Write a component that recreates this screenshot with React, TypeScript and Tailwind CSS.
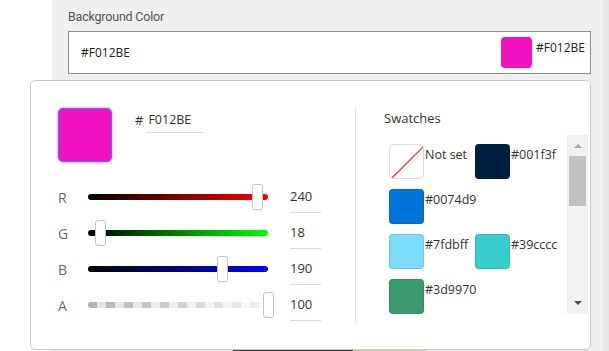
import { useState } from "react";

type Channel = {
  label: string;
  value: number;
  max: number;
  track: string;
};

const channels: Channel[] = [
  { label: "R", value: 240, max: 255, track: "bg-[linear-gradient(to_right,#000,#ff0000)]" },
  { label: "G", value: 18, max: 255, track: "bg-[linear-gradient(to_right,#000,#00ff00)]" },
  { label: "B", value: 190, max: 255, track: "bg-[linear-gradient(to_right,#000,#0000ff)]" },
  {
    label: "A",
    value: 100,
    max: 100,
    track:
      "bg-[linear-gradient(to_right,rgba(255,255,255,0.15),rgba(255,255,255,0.85)),repeating-linear-gradient(90deg,#a3a3a3_0_9px,#dddddd_9px_18px)]",
  },
];

type Swatch = { name: string; color?: string };

const swatchRows: Swatch[][] = [
  [{ name: "Not set" }, { name: "#001f3f", color: "bg-[#001f3f]" }],
  [{ name: "#0074d9", color: "bg-[#0074d9]" }],
  [
    { name: "#7fdbff", color: "bg-[#7fdbff]" },
    { name: "#39cccc", color: "bg-[#39cccc]" },
  ],
  [{ name: "#3d9970", color: "bg-[#3d9970]" }],
];

function SliderRow({ channel }: { channel: Channel }) {
  const left = (channel.value / channel.max) * 180;
  return (
    <div className="flex h-[36px] items-center">
      <span className="w-[30px] text-[14px] text-[#6b6b6b]">{channel.label}</span>
      <div className={`relative h-[6px] w-[180px] rounded-full ${channel.track}`}>
        <div
          className="absolute top-[-10px] h-[26px] w-[11px] rounded-[3px] border border-[#c4c4c4] bg-white"
          style={{ left: left - 5.5 }}
        />
      </div>
      <div className="ml-[22px] flex h-[32px] w-[31px] items-center border-b border-[#dedede] text-[13px] text-[#333]">
        {channel.value}
      </div>
    </div>
  );
}

function SwatchItem({ swatch, wide }: { swatch: Swatch; wide: boolean }) {
  return (
    <div className={`flex items-start ${wide ? "w-[86px]" : ""}`}>
      {swatch.color ? (
        <div className={`h-[35px] w-[35px] shrink-0 rounded-[4px] border border-black/10 ${swatch.color}`} />
      ) : (
        <div className="relative h-[35px] w-[35px] shrink-0 overflow-hidden rounded-[4px] border border-[#dcdcdc] bg-white">
          <svg className="absolute inset-0" width="35" height="35" viewBox="0 0 35 35">
            <line x1="1" y1="34" x2="34" y2="1" stroke="#e02020" strokeWidth="1.2" />
          </svg>
        </div>
      )}
      <span className="ml-[1px] mt-[1px] text-[12.5px] leading-[20px] text-[#333]">{swatch.name}</span>
    </div>
  );
}

export default function App() {
  const [hex] = useState("F012BE");

  return (
    <div className="relative h-[351px] w-[609px] overflow-hidden bg-white font-['Open_Sans',sans-serif]">
      <div className="ml-[52px] flex h-full bg-[#efefef]">
        <div className="flex-1 pl-[16px] pt-[7px]">
          <div className="font-['Roboto',sans-serif] text-[12.5px] leading-[20px] tracking-[-0.2px] text-[#555]">
            Background Color
          </div>
          <div className="mt-[4px] flex h-[43px] w-[523px] items-center border border-[#8c8c8c] bg-white pl-[12px] pr-[5px]">
            <span className="flex-1 text-[12px] text-[#222]">#{hex}</span>
            <div className="flex items-start self-start pt-[5px]">
              <div className="h-[31px] w-[31px] rounded-[4px] bg-[#f012be]" />
              <span className="ml-[4px] mt-[2px] text-[12px] leading-[18px] text-[#222]">#{hex}</span>
            </div>
          </div>
        </div>
        <div className="w-[6px] bg-[#e6e6e6]" />
      </div>

      <div className="absolute bottom-0 left-[233px] h-[3px] w-[194px] bg-[linear-gradient(to_right,#3a3a3a_0_62%,#d8cba8_62%_100%)]" />

      <div className="absolute left-[30px] top-[80px] flex h-[270px] w-[561px] rounded-[5px] border border-[#c9c9c9] bg-white pb-[26px] pl-[27px] pt-[27px]">
        <div className="w-[297px] shrink-0">
          <div className="flex items-start">
            <div className="h-[54px] w-[54px] rounded-[5px] border border-[#6f63f2] bg-[#f012be] shadow-[0_0_3px_#8a80ff]" />
            <div className="ml-[23px] flex h-[25px] items-center">
              <span className="text-[13px] text-[#333]">#</span>
              <div className="ml-[3px] flex h-[25px] w-[57px] items-center border-b border-[#dedede] pl-[2px] text-[12.5px] text-[#333]">
                {hex}
              </div>
            </div>
          </div>
          <div className="mt-[17px]">
            {channels.map((c) => (
              <SliderRow key={c.label} channel={c} />
            ))}
          </div>
        </div>

        <div className="flex flex-1 flex-col border-l border-[#e3e3e3] pl-[28px]">
          <div className="text-[13px] leading-[20px] text-[#333]">Swatches</div>
          <div className="mt-[7px] flex h-[179px] pr-[2px]">
            <div className="flex flex-1 flex-col gap-[10px] pl-[5px] pt-[9px]">
              {swatchRows.map((row, i) => (
                <div key={i} className="flex">
                  {row.map((s, j) => (
                    <SwatchItem key={s.name} swatch={s} wide={j < row.length - 1} />
                  ))}
                </div>
              ))}
            </div>
            <div className="flex w-[21px] flex-col items-center bg-[#f1f1f1]">
              <div className="mt-[9px] h-0 w-0 border-x-[4px] border-b-[4px] border-x-transparent border-b-[#a3a3a3]" />
              <div className="mt-[8px] h-[50px] w-[17px] bg-[#c1c1c1]" />
              <div className="mt-auto mb-[9px] h-0 w-0 border-x-[4px] border-t-[4px] border-x-transparent border-t-[#505050]" />
            </div>
          </div>
        </div>
      </div>
    </div>
  );
}
